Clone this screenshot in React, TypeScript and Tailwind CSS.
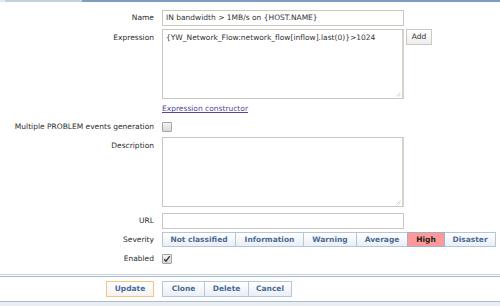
import React from "react";

const font = { fontFamily: '"DejaVu Sans", Verdana, sans-serif' };

function Check({ checked }: { checked?: boolean }) {
  return (
    <span className="flex h-[10px] w-[10px] items-center justify-center rounded-[1px] border border-[#a3a3a3] bg-gradient-to-b from-[#f4f4f4] to-[#d8d8d8]">
      {checked && (
        <svg width="8" height="8" viewBox="0 0 8 8">
          <path d="M1.2 4.2 L3 6.2 L6.8 1.2" fill="none" stroke="#333" strokeWidth="1.4" />
        </svg>
      )}
    </span>
  );
}

function Area({ value }: { value?: string }) {
  return (
    <div className="relative h-[70px] w-[242px]">
      <textarea
        readOnly
        className="block h-[70px] w-[242px] resize-none border border-[#cbc7bf] border-r-2 border-r-[#d6d3cc] px-[3px] py-[2px] text-[#333] outline-none"
        style={{ fontSize: "7.5px", ...font }}
        value={value ?? ""}
      />
      <svg className="absolute bottom-[2px] right-[3px]" width="5" height="5" viewBox="0 0 5 5">
        <path d="M0.5 4.5 L4.5 0.5 M2.5 4.5 L4.5 2.5" stroke="#c8c5be" strokeWidth="0.8" />
      </svg>
    </div>
  );
}

const sev = [
  { t: "Not classified", w: "w-[74px]" },
  { t: "Information", w: "w-[69px]" },
  { t: "Warning", w: "w-[54px]" },
  { t: "Average", w: "w-[52px]" },
  { t: "High", w: "w-[38px]", active: true },
  { t: "Disaster", w: "w-[52px]" },
];

export default function App() {
  return (
    <div className="h-[306px] w-[500px] overflow-hidden bg-white text-[7.5px] text-[#2b2b2b]" style={font}>
      <div className="flex h-[2px]">
        <div className="w-[5px] bg-[#e4e9ef]" />
        <div className="w-[77px] bg-[#c4d1df]" />
        <div className="flex-1 bg-[#7e9dc3]" />
      </div>

      <div className="grid grid-cols-[154px_1fr] gap-x-2">
        {/* Name */}
        <div className="mt-[8px] flex h-[16px] items-center justify-end">Name</div>
        <div className="mt-[8px] flex h-[16px] w-[242px] items-center border border-[#cbc7bf] px-[3px] text-[#333]">
          IN bandwidth &gt; 1MB/s on {"{HOST.NAME}"}
        </div>

        {/* Expression */}
        <div className="mt-[3px] flex justify-end pt-[3px]">Expression</div>
        <div className="mt-[3px] flex items-start gap-[2px]">
          <Area value={"{YW_Network_Flow:network_flow[inflow].last(0)}>1024"} />
          <div className="flex h-[16px] w-[26px] items-center justify-center border border-[#c9c9c9] bg-gradient-to-b from-white to-[#ededed] text-[#333]">
            Add
          </div>
        </div>

        {/* Expression constructor */}
        <div className="h-[20px]" />
        <div className="flex h-[20px] items-center">
          <span className="text-[#5347a6] underline">Expression constructor</span>
        </div>

        {/* Multiple */}
        <div className="flex h-[16px] items-center justify-end">Multiple PROBLEM events generation</div>
        <div className="flex h-[16px] items-center">
          <Check />
        </div>

        {/* Description */}
        <div className="mt-[2px] flex justify-end pt-[3px]">Description</div>
        <div className="mt-[2px]">
          <Area />
        </div>

        {/* URL */}
        <div className="mt-[6px] flex h-[16px] items-center justify-end">URL</div>
        <div className="mt-[6px] h-[16px] w-[242px] border border-[#cbc7bf]" />

        {/* Severity */}
        <div className="mt-[3px] flex h-[15px] items-center justify-end">Severity</div>
        <div className="mt-[3px] flex h-[15px]">
          {sev.map((s) => (
            <div
              key={s.t}
              className={`flex h-[15px] ${s.w} -ml-px first:ml-0 items-center justify-center border font-bold ${
                s.active
                  ? "relative z-10 border-[#9db2ca] bg-[#ff9999] text-[#1e1e1e]"
                  : "border-[#b5c6d9] bg-gradient-to-b from-white to-[#e9eff6] text-[#4b6a97]"
              }`}
            >
              {s.t}
            </div>
          ))}
        </div>

        {/* Enabled */}
        <div className="mt-[6px] flex h-[11px] items-center justify-end">Enabled</div>
        <div className="mt-[6px] flex h-[11px] items-center">
          <Check checked />
        </div>
      </div>

      {/* Footer */}
      <div className="mt-[10px] h-px bg-[#c3d0de]" />
      <div className="h-px bg-white" />
      <div className="h-px bg-[#a4b7cc]" />
      <div className="grid h-[24px] grid-cols-[154px_1fr] items-center gap-x-2 bg-white">
        <div className="flex justify-end">
          <div className="flex h-[16px] w-[48px] items-center justify-center border border-[#f6c47e] bg-gradient-to-b from-white to-[#f3f3f3] font-bold text-[#4b6a97]">
            Update
          </div>
        </div>
        <div className="flex">
          {[
            { t: "Clone", w: "w-[43px]" },
            { t: "Delete", w: "w-[45px]" },
            { t: "Cancel", w: "w-[44px]" },
          ].map((b) => (
            <div
              key={b.t}
              className={`flex h-[16px] ${b.w} -ml-px first:ml-0 items-center justify-center border border-[#b5c6d9] bg-gradient-to-b from-white to-[#e9eff6] font-bold text-[#4b6a97]`}
            >
              {b.t}
            </div>
          ))}
        </div>
      </div>
      <div className="h-px bg-[#a9bbd0]" />
      <div className="h-[10px] bg-[#eaedf1]" />
    </div>
  );
}
